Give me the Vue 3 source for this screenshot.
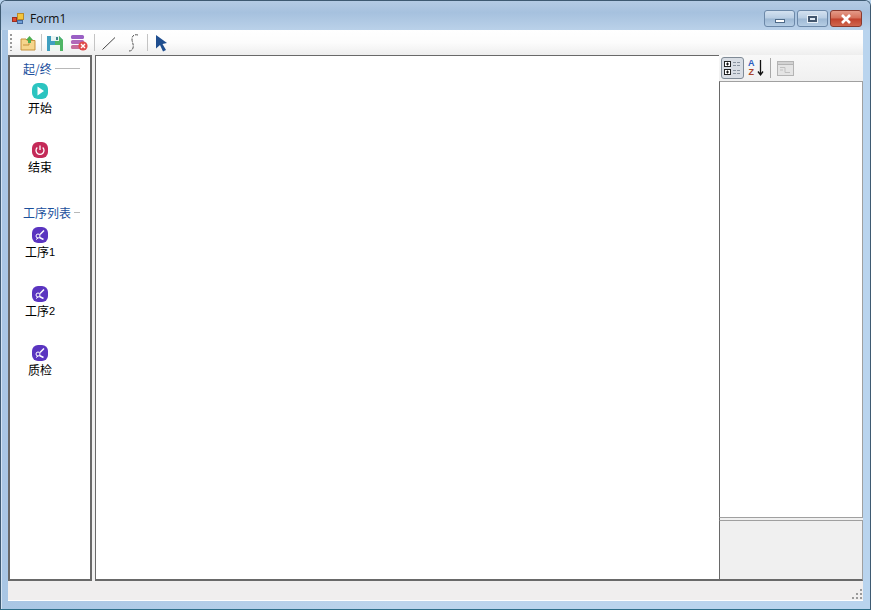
<template>
  <div class="window">
    <div class="titlebar">
      <svg class="app-icon" width="16" height="16" viewBox="0 0 16 16">
        <rect x="6.500" y="2.500" width="6" height="6" fill="#f3c53c" stroke="#b98a2a" />
        <rect x="1.500" y="6.500" width="4" height="4" fill="#e2492f" stroke="#9c3020" />
        <rect x="6.500" y="9.500" width="5" height="3" fill="#6f9fd8" stroke="#44699c" />
      </svg>
      <span class="title">Form1</span>
      <div class="caption-buttons">
        <div class="cap-btn cap-min"><span class="min-glyph"></span></div>
        <div class="cap-btn cap-max"><span class="max-glyph"></span></div>
        <div class="cap-btn cap-close">
          <svg width="14" height="10" viewBox="0 0 14 10">
            <path d="M3 1 L11 9 M11 1 L3 9" stroke="#fff" stroke-width="2.600" />
          </svg>
        </div>
      </div>
    </div>

    <div class="client">
      <div class="toolbar">
        <span class="grip"></span>
        <button class="tool">
          <svg width="16" height="16" viewBox="0 0 16 16">
            <path d="M1 4 H6 L7 5.500 H15 V15 H1 Z" fill="#f6d58c" stroke="#c5913c" />
            <path d="M3 10 H9 V6" fill="none" stroke="#c5913c" />
            <path d="M6 5 L9.500 1 L13 5 H11 V8 H8 V5 Z" fill="#4cae4f" />
          </svg>
        </button>
        <span class="sep"></span>
        <button class="tool">
          <svg width="16" height="16" viewBox="0 0 16 16">
            <path d="M0 1 H12 L16 5 V16 H0 Z" fill="#3f9fc0" />
            <path d="M8 1 H12 L16 5 V16 H8 Z" fill="#4fb565" />
            <rect x="4" y="1" width="8" height="5" fill="#e8f4f2" />
            <rect x="3" y="10" width="10" height="6" fill="#eef6f1" />
            <rect x="9" y="2" width="2" height="3" fill="#3f7f90" />
          </svg>
        </button>
        <button class="tool tool-db">
          <svg width="18" height="17" viewBox="0 0 18 17">
            <rect x="1" y="1" width="13" height="4" rx="1.500" fill="#9a5fc4" />
            <rect x="1" y="6" width="13" height="4" rx="1.500" fill="#b268b8" />
            <rect x="1" y="11" width="13" height="4" rx="1.500" fill="#c86c9c" />
            <circle cx="13" cy="12" r="4.600" fill="#e04a4a" />
            <path d="M11 10 L15 14 M15 10 L11 14" stroke="#fff" stroke-width="1.400" />
          </svg>
        </button>
        <span class="sep"></span>
        <button class="tool tool-wide">
          <svg width="16" height="16" viewBox="0 0 16 16">
            <path d="M1.500 14.500 L14 2.500" stroke="#444" stroke-width="1" fill="none" />
          </svg>
        </button>
        <button class="tool tool-wide">
          <svg width="16" height="20" viewBox="0 0 16 20">
            <path d="M13 2 C9 1 7 3 7 6 C7 10 9 11 8 15 C7.500 17 6 18 4 18" stroke="#555" stroke-width="1" stroke-dasharray="3 1" fill="none" />
          </svg>
        </button>
        <span class="sep"></span>
        <button class="tool">
          <svg width="14" height="18" viewBox="0 0 14 18">
            <path d="M2 1 L13 9 L8.500 10 L12 16 L9 17.500 L6 11 L2 14.500 Z" fill="#1f4e8f" />
          </svg>
        </button>
      </div>

      <div class="workarea">
        <aside class="toolbox">
          <template v-for="group in groups" :key="group.name">
            <div class="group-head">
              <span>{{ group.name }}</span>
              <i></i>
            </div>
            <div class="group-items">
              <div v-for="item in group.items" :key="item.label" class="tool-item">
                <span class="badge" :style="{ background: item.color }">
                  <svg v-if="item.kind === 'play'" width="16" height="16" viewBox="0 0 16 16">
                    <path d="M5.500 3.500 L12 8 L5.500 12.500 Z" fill="#fff" />
                  </svg>
                  <svg v-else-if="item.kind === 'power'" width="16" height="16" viewBox="0 0 16 16">
                    <path d="M5.300 5.500 A4 4 0 1 0 10.700 5.500 M8 3.500 V8" stroke="#fff" stroke-width="1.300" fill="none" />
                  </svg>
                  <svg v-else width="16" height="16" viewBox="0 0 16 16">
                    <path d="M12 3.500 L8 7.500" stroke="#fff" stroke-width="1.500" fill="none" />
                    <circle cx="6" cy="9" r="2" stroke="#fff" stroke-width="1" fill="none" />
                    <path d="M7.500 10.500 L11.500 12.500" stroke="#fff" stroke-width="1.400" />
                    <path d="M4 12.500 L6 11" stroke="#fff" stroke-width="1" />
                  </svg>
                </span>
                <span class="item-label">{{ item.name }}<small v-if="item.num">{{ item.num }}</small></span>
              </div>
            </div>
          </template>
        </aside>

        <main class="canvas"></main>

        <section class="props">
          <div class="props-bar">
            <button class="prop-btn active">
              <svg width="20" height="18" viewBox="0 0 20 18">
                <rect x="1.500" y="2.500" width="6" height="5" fill="#fff" stroke="#222" />
                <path d="M3 5 H6 M4.500 3.500 V6.500" stroke="#111" />
                <rect x="1.500" y="10.500" width="6" height="5" fill="#fff" stroke="#222" />
                <path d="M3 13 H6 M4.500 11.500 V14.500" stroke="#111" />
                <path d="M10 3.500 H18 M10 6.500 H18 M10 11.500 H18 M10 14.500 H18" stroke="#8a94a0" stroke-dasharray="3 1" />
              </svg>
            </button>
            <button class="prop-btn">
              <svg width="20" height="20" viewBox="0 0 20 20">
                <path d="M14.500 2 V16 M12 13.500 L14.500 17 L17 13.500" stroke="#111" stroke-width="1.300" fill="none" />
              </svg>
              <span class="az"><b>A</b><b class="z">Z</b></span>
            </button>
            <span class="prop-sep"></span>
            <button class="prop-btn">
              <svg width="17" height="15" viewBox="0 0 17 15">
                <rect x="0.500" y="0.500" width="16" height="14" fill="#e4e4e4" stroke="#b4b4b4" />
                <rect x="0.500" y="0.500" width="16" height="3" fill="#d2d2d2" stroke="#b4b4b4" />
                <path d="M3 6.500 H8 V11.500 H13 M3 9 H6" stroke="#c0c0c0" fill="none" />
              </svg>
            </button>
          </div>
          <div class="props-list"></div>
          <div class="props-help"></div>
        </section>
      </div>

      <footer class="statusbar">
        <svg class="sizer" width="12" height="12" viewBox="0 0 12 12">
          <g fill="#9a9a9a">
            <rect x="9" y="1" width="2" height="2" />
            <rect x="5" y="5" width="2" height="2" />
            <rect x="9" y="5" width="2" height="2" />
            <rect x="1" y="9" width="2" height="2" />
            <rect x="5" y="9" width="2" height="2" />
            <rect x="9" y="9" width="2" height="2" />
          </g>
        </svg>
      </footer>
    </div>
  </div>
</template>

<script setup>
const TEAL = '#2bc4c0'
const RED = '#c42a58'
const PURPLE = '#5a34c0'

const groups = [
  {
    name: '起/终',
    items: [
      { label: 'start', name: '开始', kind: 'play', color: TEAL },
      { label: 'end', name: '结束', kind: 'power', color: RED },
    ],
  },
  {
    name: '工序列表',
    items: [
      { label: 'p1', name: '工序', num: '1', kind: 'tool', color: PURPLE },
      { label: 'p2', name: '工序', num: '2', kind: 'tool', color: PURPLE },
      { label: 'qc', name: '质检', kind: 'tool', color: PURPLE },
    ],
  },
]
</script>

<style>
html,
body {
  margin: 0;
  background: #b9d4ee;
}
</style>

<style scoped>
.window {
  width: 871px;
  height: 610px;
  box-sizing: border-box;
  display: flex;
  flex-direction: column;
  border: 1px solid #3e5a72;
  border-bottom-color: #2f6f8a;
  border-radius: 6px 6px 0 0;
  box-shadow: inset 1px 1px 0 rgba(255, 255, 255, 0.5);
  background: linear-gradient(90deg, #a9c6e4 0%, #bcd4ec 45%, #b9d4ee 100%);
  font-family: "Noto Sans CJK SC", "Liberation Sans", sans-serif;
  font-size: 12px;
  color: #000;
  overflow: hidden;
}

.titlebar {
  height: 29px;
  flex: none;
  box-sizing: border-box;
  display: flex;
  align-items: center;
  padding: 6px 8px 0 10px;
  background: linear-gradient(180deg, #b4cbe4 0%, #a6c1de 40%, #bad1e9 100%);
}

.app-icon {
  margin-right: 3px;
}

.title {
  font-family: "Open Sans", "Liberation Sans", sans-serif;
  font-size: 12px;
  color: #111;
}

.caption-buttons {
  margin-left: auto;
  display: flex;
  align-self: flex-start;
  gap: 2px;
  margin-top: 3px;
}

.cap-btn {
  height: 17px;
  box-sizing: border-box;
  display: flex;
  align-items: center;
  justify-content: center;
  border: 1px solid #6c88a8;
  border-radius: 3px;
  background: linear-gradient(180deg, #d3e1f0 0%, #b8cde3 48%, #9db8d4 52%, #b5cde4 100%);
}

.cap-min,
.cap-max {
  width: 31px;
}

.cap-close {
  width: 32px;
  border-color: #8a3a2e;
  background: linear-gradient(180deg, #e49a88 0%, #d5705a 48%, #c1412c 52%, #d0664e 100%);
}

.min-glyph {
  width: 8px;
  height: 2px;
  margin-top: 5px;
  background: #fff;
  border: 1px solid #4e6a88;
}

.max-glyph {
  width: 5px;
  height: 2px;
  border: 2px solid #42566e;
  background: #dfe9f3;
  box-shadow: 0 0 0 1px #e8f0f8;
}

.client {
  flex: 1;
  min-height: 0;
  margin: 0 7px 8px 7px;
  display: flex;
  flex-direction: column;
  background: #f0f0f0;
}

.toolbar {
  height: 25px;
  flex: none;
  display: flex;
  align-items: center;
  padding-left: 2px;
  background: linear-gradient(180deg, #fff 0%, #fcfcfc 50%, #eeeeee 100%);
}

.grip {
  width: 2px;
  height: 17px;
  margin-right: 5px;
  background: repeating-linear-gradient(180deg, #9a9a9a 0 2px, transparent 2px 4px);
}

.tool {
  width: 20px;
  height: 22px;
  padding: 0;
  border: 0;
  background: none;
  display: flex;
  align-items: center;
  justify-content: center;
  margin: 0 1px;
}

.tool-wide {
  width: 22px;
}

.tool-db {
  width: 23px;
  margin-right: 2px;
}

.sep {
  width: 1px;
  height: 17px;
  margin: 0 2px;
  background: #c4c4c4;
}

.workarea {
  flex: 1;
  min-height: 0;
  display: flex;
}

.toolbox {
  width: 84px;
  flex: none;
  box-sizing: border-box;
  border: 2px solid #696969;
  background: #fff;
  padding-top: 3px;
  overflow: hidden;
}

.group-head {
  height: 16px;
  display: flex;
  align-items: center;
  gap: 3px;
  padding-left: 13px;
  color: #1b4f9c;
  white-space: nowrap;
}

.group-head i {
  flex: 1;
  height: 1px;
  margin-right: 10px;
  background: #b8b8b8;
}

.group-items {
  margin-bottom: 10px;
}

.tool-item {
  width: 60px;
  height: 59px;
  box-sizing: border-box;
  padding-top: 7px;
  display: flex;
  flex-direction: column;
  align-items: center;
}

.badge {
  width: 16px;
  height: 16px;
  border-radius: 6px;
  display: block;
  overflow: hidden;
}

.badge svg {
  display: block;
}

.item-label {
  line-height: 17px;
  height: 17px;
  white-space: nowrap;
}

.item-label small {
  font-family: "Liberation Sans", sans-serif;
  font-size: 11px;
  vertical-align: 1px;
}

.canvas {
  width: 625px;
  flex: none;
  box-sizing: border-box;
  margin-left: 3px;
  border: 1px solid #696969;
  border-bottom-width: 2px;
  background: #fff;
}

.props {
  flex: 1;
  min-width: 0;
  display: flex;
  flex-direction: column;
  margin-left: -1px;
}

.props-bar {
  height: 26px;
  flex: none;
  display: flex;
  align-items: center;
  padding-left: 2px;
  background: linear-gradient(180deg, #f8f8f8 0%, #f0f0f0 100%);
}

.prop-btn {
  position: relative;
  width: 23px;
  height: 22px;
  padding: 0;
  border: 1px solid transparent;
  border-radius: 3px;
  background: none;
  display: flex;
  align-items: center;
  justify-content: center;
}

.prop-btn.active {
  border-color: #7f8a96;
  background: #d8dde4;
}

.az {
  position: absolute;
  left: 3px;
  top: 1px;
  display: flex;
  flex-direction: column;
  font-family: "Liberation Sans", sans-serif;
  font-size: 9px;
  line-height: 9px;
}

.az b {
  font-weight: 700;
  color: #2a5bc0;
}

.az .z {
  color: #a8452c;
}

.prop-sep {
  width: 1px;
  height: 20px;
  margin: 0 3px;
  background: #a8a8a8;
}

.props-list {
  flex: 1;
  background: #fff;
  border: 1px solid #a0a0a0;
  border-left-color: #696969;
}

.props-help {
  height: 61px;
  flex: none;
  box-sizing: border-box;
  margin-top: 2px;
  border: 1px solid #a0a0a0;
  border-left-color: #696969;
  border-bottom: 2px solid #696969;
  background: #f0f0f0;
}

.statusbar {
  height: 20px;
  flex: none;
  box-sizing: border-box;
  display: flex;
  justify-content: flex-end;
  align-items: flex-end;
  background: #f0eeee;
  border-bottom: 1px solid #fff;
}

.sizer {
  display: block;
}
</style>
